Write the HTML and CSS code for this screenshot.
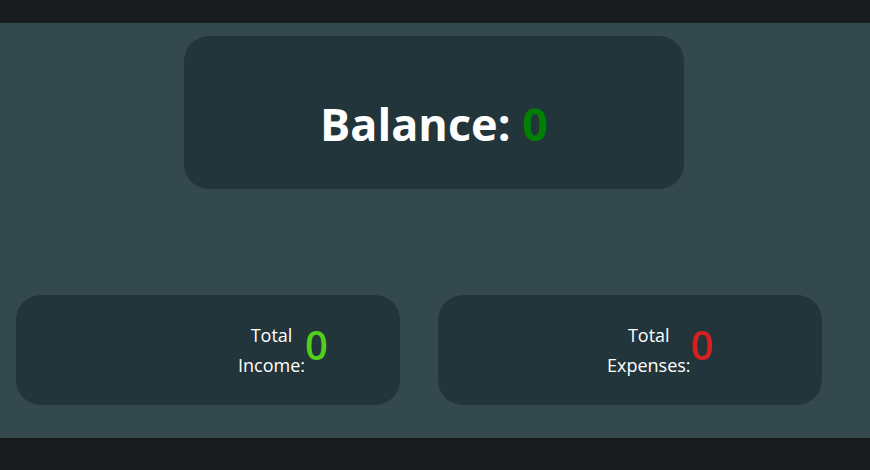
FILE: index.html
```html
<!DOCTYPE html>
<html lang="en">
<head>
<meta charset="utf-8">
<title>Budget</title>
<link rel="stylesheet" href="styles.css">
</head>
<body>
  <header class="topbar"></header>
  <main class="main">
    <section class="balance-card">
      <h1 class="balance-title">Balance: <span class="balance-value">0</span></h1>
    </section>
    <section class="totals">
      <div class="total-card total-card--income">
        <h3 class="total-label">Total Income:</h3>
        <span class="total-value total-value--income">0</span>
      </div>
      <div class="total-card total-card--expenses">
        <h3 class="total-label">Total Expenses:</h3>
        <span class="total-value total-value--expenses">0</span>
      </div>
    </section>
  </main>
  <footer class="bottombar"></footer>
</body>
</html>
```
FILE: styles.css
```css
* { box-sizing: border-box; }

html, body {
  margin: 0;
  padding: 0;
}

body {
  width: 870px;
  height: 470px;
  overflow: hidden;
  font-family: "Open Sans", "Noto Sans", sans-serif;
  color: #ffffff;
  background: #34494e;
  display: flex;
  flex-direction: column;
}

.topbar {
  height: 23px;
  background: #191c1d;
  flex: none;
}

.main {
  height: 415px;
  flex: none;
  background: #34494e;
  padding-top: 13px;
  display: flex;
  flex-direction: column;
}

.bottombar {
  flex: 1;
  background: #191c1d;
}

.balance-card {
  width: 500px;
  height: 153px;
  margin-left: 184px;
  background: #22353b;
  border-radius: 25px;
  padding-top: 65px;
}

.balance-title {
  margin: 0;
  font-size: 45px;
  line-height: 46px;
  font-weight: 700;
  text-align: center;
}

.balance-value {
  color: #008000;
}

.totals {
  margin-top: 106px;
  padding-left: 16px;
  display: flex;
  gap: 38px;
}

.total-card {
  width: 384px;
  height: 110px;
  background: #22353b;
  border-radius: 25px;
  display: flex;
  align-items: center;
}

.total-card--income { padding-left: 222px; }
.total-card--expenses { padding-left: 169px; }

.total-label {
  margin: 0;
  width: min-content;
  font-size: 18px;
  line-height: 30px;
  font-weight: 400;
  text-align: center;
}

.total-value {
  font-size: 40px;
  line-height: 40px;
  font-weight: 600;
  margin-bottom: 10px;
}

.total-value--income { color: #52cf1d; }
.total-value--expenses { color: #d61f1f; }
```
